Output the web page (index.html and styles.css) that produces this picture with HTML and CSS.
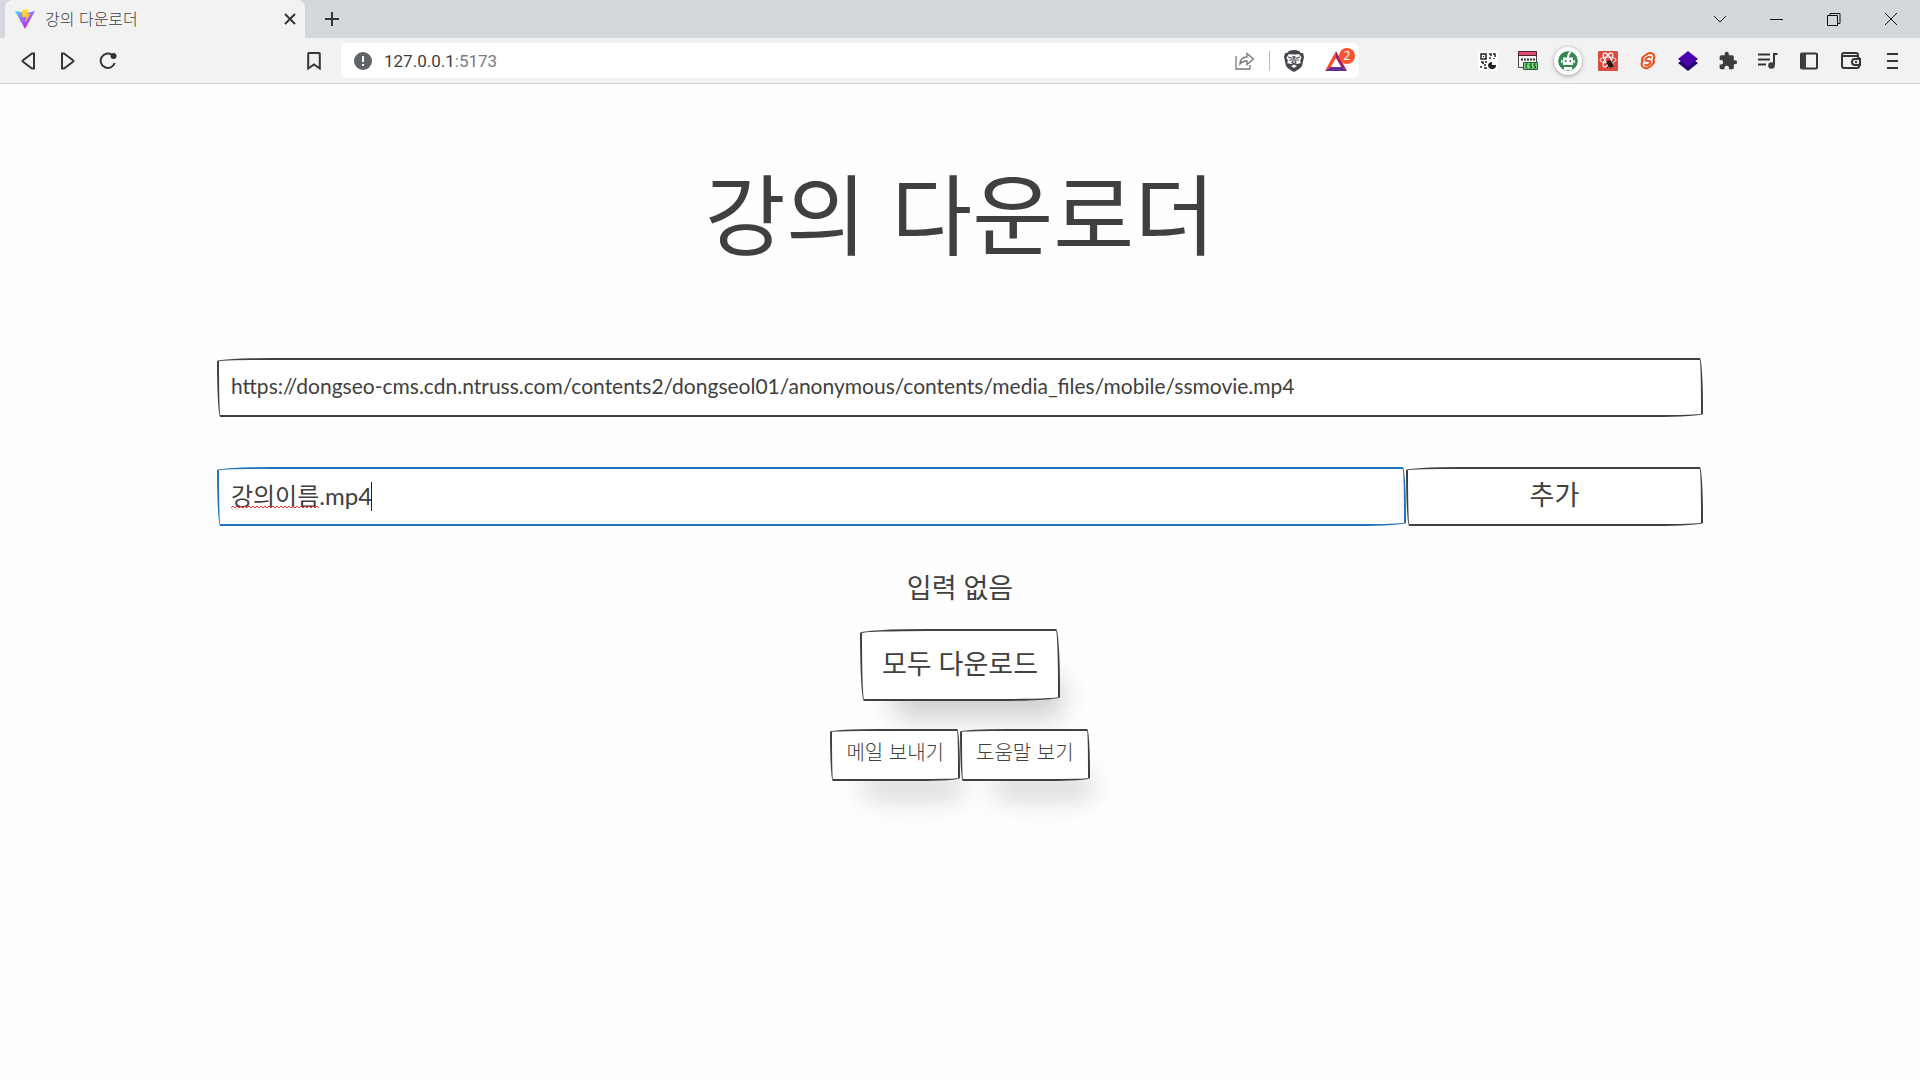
FILE: index.html
```html
<!DOCTYPE html>
<html lang="ko">
<head>
<meta charset="utf-8">
<title>강의 다운로더</title>
<link rel="stylesheet" href="styles.css">
</head>
<body>
<header class="browser">
  <div class="tabbar">
    <div class="tab">
      <svg class="icon" width="20" height="20" viewBox="0 0 20 20"><defs><linearGradient id="v" x2=".6" y2="1"><stop stop-color="#41d1ff"/><stop offset=".5" stop-color="#9b6bff"/><stop offset="1" stop-color="#c222dc"/></linearGradient><linearGradient id="y" x2="0" y2="1"><stop stop-color="#ffe24a"/><stop offset="1" stop-color="#ffab10"/></linearGradient></defs><path fill="url(#v)" d="M0 2l10 18L20 2l-8 2-6-1z"/><path fill="url(#y)" d="M7 1l7-1-2 5h3l-5 9 1-6H7z"/></svg>
      <span class="tab-title">강의 다운로더</span>
      <button class="icon-btn tab-close" aria-label="탭 닫기"><svg width="12" height="12" viewBox="0 0 12 12"><path class="line" d="M1 1l10 10M11 1L1 11"/></svg></button>
    </div>
    <button class="icon-btn new-tab" aria-label="새 탭"><svg width="16" height="16" viewBox="0 0 16 16"><path class="line" d="M8 1v14M1 8h14"/></svg></button>
    <div class="window-controls">
      <button class="icon-btn" aria-label="탭 검색"><svg width="14" height="14" viewBox="0 0 14 14"><path class="thin" d="M1 4l6 6 6-6"/></svg></button>
      <button class="icon-btn" aria-label="최소화"><svg width="14" height="14" viewBox="0 0 14 14"><path class="thin" d="M0 7.500h13"/></svg></button>
      <button class="icon-btn" aria-label="이전 크기로"><svg width="14" height="14" viewBox="0 0 14 14"><path class="thin" d="M.5 3.500h10v10H.5zM3 3V1.500h10v10h-2"/></svg></button>
      <button class="icon-btn" aria-label="닫기"><svg width="14" height="14" viewBox="0 0 14 14"><path class="thin" d="M1 1l12 12M13 1L1 13"/></svg></button>
    </div>
  </div>
  <div class="toolbar">
    <div class="nav">
      <button class="icon-btn" aria-label="뒤로"><svg width="16" height="18" viewBox="0 0 16 18"><path class="line" d="M12 1.500h2v15h-2L3 9.800q-1-.8 0-1.600z"/></svg></button>
      <button class="icon-btn" aria-label="앞으로"><svg width="16" height="18" viewBox="0 0 16 18"><path class="line" d="M4 1.500H2v15h2l9-6.700q1-.8 0-1.600z"/></svg></button>
      <button class="icon-btn" aria-label="새로고침"><svg width="18" height="18" viewBox="0 0 18 18"><path class="line" d="M13 2.800A7.200 7.200 0 1 0 15.700 11"/><circle cx="14.500" cy="4" r="3" fill="#333"/></svg></button>
    </div>
    <button class="icon-btn bookmark" aria-label="북마크"><svg width="14" height="18" viewBox="0 0 14 18"><path class="line" d="M2 1h10q.8 0 .8.800V16.500L7 12.500l-5.800 4V1.800Q1.200 1 2 1z"/></svg></button>
    <div class="address">
      <svg width="18" height="18" viewBox="0 0 18 18"><circle cx="9" cy="9" r="9" fill="#5f6368"/><path d="M9 4v6M9 12v2" stroke="#fff" stroke-width="2"/></svg>
      <a class="url" href="#">127.0.0.1<span class="port">:5173</span></a>
      <button class="icon-btn" aria-label="공유"><svg width="20" height="18" viewBox="0 0 20 18"><path fill="none" stroke="#777" stroke-width="1.300" d="M1 4v13h14v-4M5 12q0-7 7-7V1.500L18.500 7 12 12.500V9q-5 0-7 3z"/></svg></button>
      <span class="divider"></span>
      <button class="icon-btn" aria-label="실드"><svg width="20" height="22" viewBox="0 0 20 22"><path fill="#46464f" d="M5 1q5-2 10 0l2 2h2l1 4-2 9q-2 3-8 6-6-3-8-6L0 7l1-4h2z"/><path fill="#fff" d="M5 4l3 .500h4l3-.500 2.500 3.500-1.500 3.500 1 2-4 1-3-1-3 1-4-1 1-2-1.500-3.500zM7 16l3-1.500 3 1.500-3 2z"/><path stroke="#46464f" fill="none" stroke-width="1.200" d="M4 7l4 1.200M16 7l-4 1.200M5 10h3M15 10h-3M9.300 6L9 11l-1 1.500 2 1 2-1-1-1.500-.3-5"/></svg></button>
      <button class="icon-btn rewards" aria-label="리워드"><svg width="22" height="20" viewBox="0 0 22 20"><path fill="#ff4724" d="M11 0v7L5.500 16.500 0 20z"/><path fill="#9e1f63" d="M11 0l11 20-5.500-3.500L11 7z"/><path fill="#662d91" d="M0 20l5.500-4h11L22 20z"/></svg><span class="badge">2</span></button>
    </div>
    <div class="extensions">
      <button class="icon-btn" aria-label="QR 코드"><svg width="20" height="20" viewBox="0 0 20 20"><rect width="20" height="20" rx="2" fill="#fff"/><path fill="none" stroke="#222" stroke-width="1.500" d="M3 3h5v5H3zM11 3h2v2M12 8V6M15 3h2v3M16 8V7M3 11h2v2M7 11h2M6 14h2M3 17v-2M6 17h3"/><path d="M5 5h1v1H5z"/><path fill="#222" d="M14 11v3h4a4 3.500 0 1 1-4-3z"/></svg></button>
      <button class="icon-btn" aria-label="CSS 도구"><svg width="20" height="20" viewBox="0 0 20 20"><path fill="#f7f7f7" stroke="#444" d="M.5.500h18v16H.5z"/><path fill="#df4b70" stroke="#50242d" d="M.5.500h18v4H.5z"/><path stroke="#333" stroke-width="2" stroke-dasharray="2 1" d="M3 8.500h14"/><path fill="#78d67d" stroke="#235c2a" d="M5.500 11.500h14v7h-14z"/><path fill="none" stroke="#164d1b" d="M9.500 13H8v4h1.500M14 13h-2v2h1.500v2h-2M18 13h-2v2h1.500v2h-2"/></svg></button>
      <button class="icon-btn robot" aria-label="로봇"><svg width="20" height="20" viewBox="0 0 20 20"><circle cx="10" cy="10" r="10" fill="#35894d"/><path stroke="#fff" stroke-width="2" d="M10 7q0-4 2.500-6" fill="none"/><path fill="#fff" d="M5 6.500h10v7.500H5zM6 16h8v3H6zM3 9h1.500v3H3zM15.500 9H17v3h-1.500z"/><path fill="#35894d" d="M7 9h1.500v2H7zM11.500 9H13v2h-1.500z"/></svg></button>
      <button class="icon-btn" aria-label="React 도구"><svg width="20" height="20" viewBox="0 0 20 20"><rect width="20" height="20" rx="1" fill="#d94b40"/><g fill="none" stroke="#fff"><ellipse cx="10" cy="9" rx="8" ry="3"/><ellipse cx="10" cy="9" rx="8" ry="3" transform="rotate(60 10 9)"/><ellipse cx="10" cy="9" rx="8" ry="3" transform="rotate(120 10 9)"/></g><ellipse cx="12" cy="13" rx="2.500" ry="4" fill="#35140f" transform="rotate(-35 12 13)"/><path stroke="#35140f" d="M8 12l8 3M9 17l6-7M12 9l1 8"/></svg></button>
      <button class="icon-btn" aria-label="Svelte 도구"><svg width="20" height="20" viewBox="0 0 20 20"><path fill="none" stroke="#f04b17" stroke-width="2" d="M10 2.500l-4 2.700Q3 7.500 4.500 10 2.500 14 5 16q2.500 2 5 .800l4-2.800q3-2.500 1.500-5 2-3.800-.500-6-2.500-1.700-5-.500z"/><path fill="none" stroke="#f04b17" stroke-width="1.800" d="M13 7q-1-2-3-1L8 7.500q-2 2 .500 2.300l3 .400q2.500 1-.500 3l-1.500 1q-2 .700-2.500-1.200"/></svg></button>
      <button class="icon-btn" aria-label="레이어"><svg width="20" height="20" viewBox="0 0 20 20"><path fill="#21036d" d="M0 12l3-2h14l3 2-10 8z"/><path fill="#4a00aa" d="M10 0l10 8-10 8L0 8z"/></svg></button>
      <button class="icon-btn" aria-label="확장 프로그램"><svg width="20" height="20" viewBox="0 0 24 24"><path fill="#3b3d40" d="M20.500 11H19V7q0-2-2-2h-4V3.500a2.500 2.500 0 0 0-5 0V5H4q-2 0-2 2v3.800h1.500a2.700 2.700 0 0 1 0 5.400H2V20q0 2 2 2h3.800v-1.500a2.700 2.700 0 0 1 5.400 0V22H17q2 0 2-2v-4h1.500a2.500 2.500 0 0 0 0-5z"/></svg></button>
      <button class="icon-btn" aria-label="미디어"><svg width="20" height="18" viewBox="0 0 20 18"><path class="line" d="M0 2.500h12M0 7.500h12M0 12.500h8M19.500 2H16v11"/><circle cx="13.500" cy="13.500" r="3.300" fill="#3b3d40"/></svg></button>
      <button class="icon-btn wide" aria-label="사이드바"><svg width="18" height="18" viewBox="0 0 18 18"><rect x="1" y="1.500" width="16" height="15" rx="1" class="line"/><path fill="#3b3d40" d="M1 1h5v16H1z"/></svg></button>
      <button class="icon-btn wide" aria-label="지갑"><svg width="20" height="18" viewBox="0 0 20 18"><path class="line" d="M17 5V3q0-2-2-2H3Q1 1 1 3v11q0 2 2 2h13q2 0 2-2M1 4h14q3 0 3 3M19 7h-5q-3 0-3 3t3 3h5z"/><path class="line" d="M14 10h2"/></svg></button>
      <button class="icon-btn wide" aria-label="메뉴"><svg width="14" height="18" viewBox="0 0 14 18"><path class="line" d="M1 2h11M1 9h11M1 16h11"/></svg></button>
    </div>
  </div>
</header>
<main class="page">
  <h1>강의 다운로더</h1>
  <form class="form">
    <input class="paper field" type="text" aria-label="강의 주소" value="https://dongseo-cms.cdn.ntruss.com/contents2/dongseol01/anonymous/contents/media_files/mobile/ssmovie.mp4">
    <div class="name-row">
      <div class="name-field">
        <input class="paper field active" type="text" aria-label="강의 이름" value="강의이름.mp4">
        <svg class="squiggle" width="88" height="4"><defs><pattern id="wave" width="4" height="4" patternUnits="userSpaceOnUse"><path d="M0 3l2-2 2 2" fill="none" stroke="#e33"/></pattern></defs><rect width="88" height="4" fill="url(#wave)"/></svg>
        <span class="caret"></span>
      </div>
      <button class="paper add" type="button">추가</button>
    </div>
  </form>
  <p class="status">입력 없음</p>
  <button class="paper raised download" type="button">모두 다운로드</button>
  <div class="links">
    <button class="paper raised small" type="button">메일 보내기</button>
    <button class="paper raised small" type="button">도움말 보기</button>
  </div>
</main>
</body>
</html>
```
FILE: styles.css
```css
* { box-sizing: border-box; }
body {
  margin: 0;
  background: #fefefe;
  color: #41403e;
  font-family: Lato, "Noto Sans CJK KR", sans-serif;
}
button, input { font: inherit; color: inherit; }
svg { display: block; flex: none; }
.line { fill: none; stroke: #333639; stroke-width: 2; }
.thin { fill: none; stroke: #111; stroke-width: 1; }
.icon-btn {
  display: flex;
  align-items: center;
  justify-content: center;
  flex: none;
  padding: 0;
  border: 0;
  background: none;
}

/* Browser frame */
.browser { border-bottom: 1px solid #d3d5d7; background: #f2f2f2; }
.tabbar {
  display: flex;
  align-items: center;
  height: 38px;
  padding: 0 1px 0 5px;
  background: #d4d8dc;
}
.tab {
  display: flex;
  align-items: center;
  gap: 10px;
  width: 300px;
  height: 38px;
  padding: 0 9px 0 10px;
  border-radius: 8px 8px 0 0;
  background: #f2f2f2;
}
.tab-title {
  flex: 1;
  padding-bottom: 2px;
  font: 300 16px/24px "Noto Sans CJK KR", sans-serif;
}
.new-tab { width: 54px; height: 38px; }
.window-controls { display: flex; margin-left: auto; }
.window-controls .icon-btn { width: 57px; height: 38px; }
.toolbar {
  display: flex;
  align-items: center;
  height: 45px;
  padding-right: 6px;
}
.nav { display: flex; padding-left: 8px; }
.nav .icon-btn { width: 40px; height: 40px; }
.bookmark { width: 40px; height: 40px; margin: 0 7px 0 166px; }
.address {
  display: flex;
  flex: 1;
  align-items: center;
  gap: 14px;
  max-width: 1018px;
  height: 35px;
  padding: 0 8px 0 13px;
  border-radius: 5px;
  background: #fff;
}
.url {
  flex: 1;
  margin-left: -2px;
  color: #3c4043;
  font: 17px/24px Roboto, sans-serif;
  text-decoration: none;
}
.port { color: #777b80; }
.divider { width: 1px; height: 20px; background: #bbb; }
.rewards { position: relative; margin-left: 7px; }
.rewards svg { margin-right: 4px; }
.badge {
  position: absolute;
  top: -3px;
  right: -4px;
  width: 16px;
  border-radius: 8px;
  background: #fb542b;
  color: #fff;
  font: 12px/16px "Noto Sans", sans-serif;
}
.extensions { display: flex; margin-left: auto; }
.extensions .icon-btn { width: 40px; height: 40px; }
.extensions .wide { width: 42px; }
.robot svg {
  box-sizing: content-box;
  padding: 4px;
  border-radius: 50%;
  background: #fff;
  box-shadow: 0 1px 4px #999;
}

/* Downloader page */
.page {
  display: flex;
  flex-direction: column;
  align-items: center;
  padding: 58px 0 80px;
}
h1 {
  margin: 0 0 80px;
  font: 400 88px/136px "Noto Sans CJK KR", sans-serif;
}
.form { display: grid; gap: 50px; width: 77.400%; }
.paper {
  border: 2px solid #41403e;
  border-radius: 255px 15px 225px 15px / 15px 225px 15px 255px;
  background: #fff;
}
.field {
  display: block;
  width: 100%;
  height: 59px;
  padding: 0 12px 4px;
  font-size: 21px;
  outline: 0;
}
.active { border-color: #1f73bd; font-size: 24px; }
.name-row { display: grid; grid-template-columns: 4fr 1fr; }
.name-field { position: relative; }
.squiggle { position: absolute; top: 38px; left: 14px; }
.caret {
  position: absolute;
  top: 15px;
  left: 154px;
  width: 1px;
  height: 29px;
  background: #222;
}
.add { padding: 0 0 6px; font-size: 27px; }
.status { margin: 42px 0 21px; font-size: 27px; line-height: 40px; }
.download {
  height: 72px;
  padding: 0 20px 6px;
  font-size: 27px;
}
.raised { box-shadow: 18px 32px 28px -16px rgba(0, 0, 0, .2); }
.links { display: flex; margin-top: 28px; }
.small {
  height: 52px;
  padding: 0 14px 8px;
  font-family: "Noto Sans CJK KR", sans-serif;
  font-size: 20px;
  font-weight: 300;
}
```
